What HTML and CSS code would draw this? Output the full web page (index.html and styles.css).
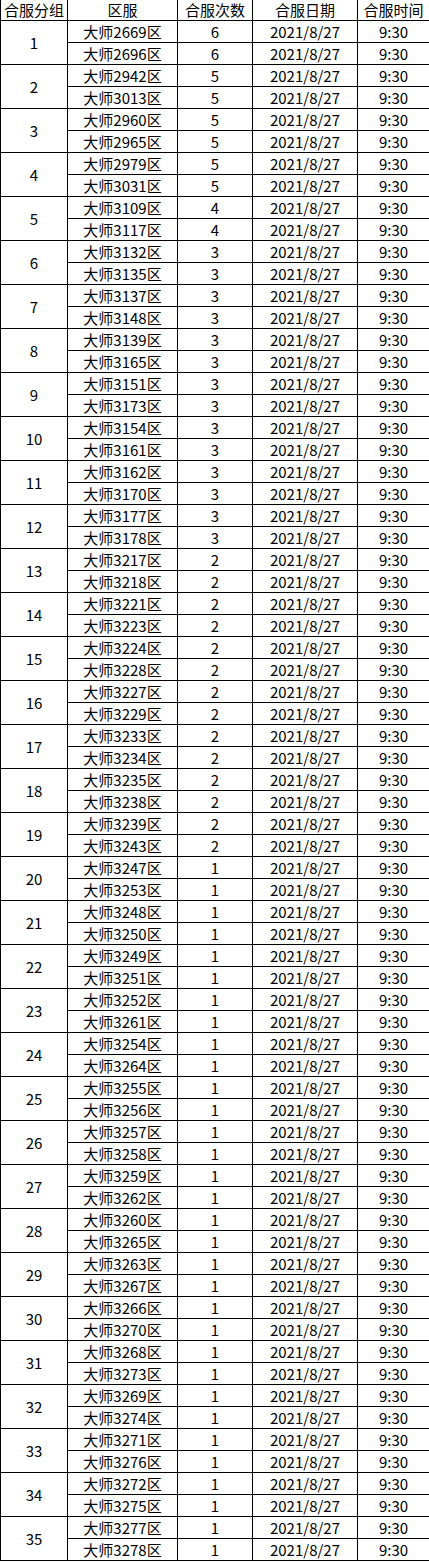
FILE: index.html
```html
<!DOCTYPE html>
<html lang="zh-CN">
<head>
<meta charset="utf-8">
<title>合服表</title>
<link rel="stylesheet" href="styles.css">
</head>
<body>
<table class="merge-table">
<colgroup>
<col class="c-group"><col class="c-zone"><col class="c-count"><col class="c-date"><col class="c-time">
</colgroup>
<thead>
<tr><th>合服分组</th><th>区服</th><th>合服次数</th><th>合服日期</th><th>合服时间</th></tr>
</thead>
<tbody>
<tr><td rowspan="2">1</td><td>大师2669区</td><td>6</td><td>2021/8/27</td><td>9:30</td></tr>
<tr><td>大师2696区</td><td>6</td><td>2021/8/27</td><td>9:30</td></tr>
<tr><td rowspan="2">2</td><td>大师2942区</td><td>5</td><td>2021/8/27</td><td>9:30</td></tr>
<tr><td>大师3013区</td><td>5</td><td>2021/8/27</td><td>9:30</td></tr>
<tr><td rowspan="2">3</td><td>大师2960区</td><td>5</td><td>2021/8/27</td><td>9:30</td></tr>
<tr><td>大师2965区</td><td>5</td><td>2021/8/27</td><td>9:30</td></tr>
<tr><td rowspan="2">4</td><td>大师2979区</td><td>5</td><td>2021/8/27</td><td>9:30</td></tr>
<tr><td>大师3031区</td><td>5</td><td>2021/8/27</td><td>9:30</td></tr>
<tr><td rowspan="2">5</td><td>大师3109区</td><td>4</td><td>2021/8/27</td><td>9:30</td></tr>
<tr><td>大师3117区</td><td>4</td><td>2021/8/27</td><td>9:30</td></tr>
<tr><td rowspan="2">6</td><td>大师3132区</td><td>3</td><td>2021/8/27</td><td>9:30</td></tr>
<tr><td>大师3135区</td><td>3</td><td>2021/8/27</td><td>9:30</td></tr>
<tr><td rowspan="2">7</td><td>大师3137区</td><td>3</td><td>2021/8/27</td><td>9:30</td></tr>
<tr><td>大师3148区</td><td>3</td><td>2021/8/27</td><td>9:30</td></tr>
<tr><td rowspan="2">8</td><td>大师3139区</td><td>3</td><td>2021/8/27</td><td>9:30</td></tr>
<tr><td>大师3165区</td><td>3</td><td>2021/8/27</td><td>9:30</td></tr>
<tr><td rowspan="2">9</td><td>大师3151区</td><td>3</td><td>2021/8/27</td><td>9:30</td></tr>
<tr><td>大师3173区</td><td>3</td><td>2021/8/27</td><td>9:30</td></tr>
<tr><td rowspan="2">10</td><td>大师3154区</td><td>3</td><td>2021/8/27</td><td>9:30</td></tr>
<tr><td>大师3161区</td><td>3</td><td>2021/8/27</td><td>9:30</td></tr>
<tr><td rowspan="2">11</td><td>大师3162区</td><td>3</td><td>2021/8/27</td><td>9:30</td></tr>
<tr><td>大师3170区</td><td>3</td><td>2021/8/27</td><td>9:30</td></tr>
<tr><td rowspan="2">12</td><td>大师3177区</td><td>3</td><td>2021/8/27</td><td>9:30</td></tr>
<tr><td>大师3178区</td><td>3</td><td>2021/8/27</td><td>9:30</td></tr>
<tr><td rowspan="2">13</td><td>大师3217区</td><td>2</td><td>2021/8/27</td><td>9:30</td></tr>
<tr><td>大师3218区</td><td>2</td><td>2021/8/27</td><td>9:30</td></tr>
<tr><td rowspan="2">14</td><td>大师3221区</td><td>2</td><td>2021/8/27</td><td>9:30</td></tr>
<tr><td>大师3223区</td><td>2</td><td>2021/8/27</td><td>9:30</td></tr>
<tr><td rowspan="2">15</td><td>大师3224区</td><td>2</td><td>2021/8/27</td><td>9:30</td></tr>
<tr><td>大师3228区</td><td>2</td><td>2021/8/27</td><td>9:30</td></tr>
<tr><td rowspan="2">16</td><td>大师3227区</td><td>2</td><td>2021/8/27</td><td>9:30</td></tr>
<tr><td>大师3229区</td><td>2</td><td>2021/8/27</td><td>9:30</td></tr>
<tr><td rowspan="2">17</td><td>大师3233区</td><td>2</td><td>2021/8/27</td><td>9:30</td></tr>
<tr><td>大师3234区</td><td>2</td><td>2021/8/27</td><td>9:30</td></tr>
<tr><td rowspan="2">18</td><td>大师3235区</td><td>2</td><td>2021/8/27</td><td>9:30</td></tr>
<tr><td>大师3238区</td><td>2</td><td>2021/8/27</td><td>9:30</td></tr>
<tr><td rowspan="2">19</td><td>大师3239区</td><td>2</td><td>2021/8/27</td><td>9:30</td></tr>
<tr><td>大师3243区</td><td>2</td><td>2021/8/27</td><td>9:30</td></tr>
<tr><td rowspan="2">20</td><td>大师3247区</td><td>1</td><td>2021/8/27</td><td>9:30</td></tr>
<tr><td>大师3253区</td><td>1</td><td>2021/8/27</td><td>9:30</td></tr>
<tr><td rowspan="2">21</td><td>大师3248区</td><td>1</td><td>2021/8/27</td><td>9:30</td></tr>
<tr><td>大师3250区</td><td>1</td><td>2021/8/27</td><td>9:30</td></tr>
<tr><td rowspan="2">22</td><td>大师3249区</td><td>1</td><td>2021/8/27</td><td>9:30</td></tr>
<tr><td>大师3251区</td><td>1</td><td>2021/8/27</td><td>9:30</td></tr>
<tr><td rowspan="2">23</td><td>大师3252区</td><td>1</td><td>2021/8/27</td><td>9:30</td></tr>
<tr><td>大师3261区</td><td>1</td><td>2021/8/27</td><td>9:30</td></tr>
<tr><td rowspan="2">24</td><td>大师3254区</td><td>1</td><td>2021/8/27</td><td>9:30</td></tr>
<tr><td>大师3264区</td><td>1</td><td>2021/8/27</td><td>9:30</td></tr>
<tr><td rowspan="2">25</td><td>大师3255区</td><td>1</td><td>2021/8/27</td><td>9:30</td></tr>
<tr><td>大师3256区</td><td>1</td><td>2021/8/27</td><td>9:30</td></tr>
<tr><td rowspan="2">26</td><td>大师3257区</td><td>1</td><td>2021/8/27</td><td>9:30</td></tr>
<tr><td>大师3258区</td><td>1</td><td>2021/8/27</td><td>9:30</td></tr>
<tr><td rowspan="2">27</td><td>大师3259区</td><td>1</td><td>2021/8/27</td><td>9:30</td></tr>
<tr><td>大师3262区</td><td>1</td><td>2021/8/27</td><td>9:30</td></tr>
<tr><td rowspan="2">28</td><td>大师3260区</td><td>1</td><td>2021/8/27</td><td>9:30</td></tr>
<tr><td>大师3265区</td><td>1</td><td>2021/8/27</td><td>9:30</td></tr>
<tr><td rowspan="2">29</td><td>大师3263区</td><td>1</td><td>2021/8/27</td><td>9:30</td></tr>
<tr><td>大师3267区</td><td>1</td><td>2021/8/27</td><td>9:30</td></tr>
<tr><td rowspan="2">30</td><td>大师3266区</td><td>1</td><td>2021/8/27</td><td>9:30</td></tr>
<tr><td>大师3270区</td><td>1</td><td>2021/8/27</td><td>9:30</td></tr>
<tr><td rowspan="2">31</td><td>大师3268区</td><td>1</td><td>2021/8/27</td><td>9:30</td></tr>
<tr><td>大师3273区</td><td>1</td><td>2021/8/27</td><td>9:30</td></tr>
<tr><td rowspan="2">32</td><td>大师3269区</td><td>1</td><td>2021/8/27</td><td>9:30</td></tr>
<tr><td>大师3274区</td><td>1</td><td>2021/8/27</td><td>9:30</td></tr>
<tr><td rowspan="2">33</td><td>大师3271区</td><td>1</td><td>2021/8/27</td><td>9:30</td></tr>
<tr><td>大师3276区</td><td>1</td><td>2021/8/27</td><td>9:30</td></tr>
<tr><td rowspan="2">34</td><td>大师3272区</td><td>1</td><td>2021/8/27</td><td>9:30</td></tr>
<tr><td>大师3275区</td><td>1</td><td>2021/8/27</td><td>9:30</td></tr>
<tr><td rowspan="2">35</td><td>大师3277区</td><td>1</td><td>2021/8/27</td><td>9:30</td></tr>
<tr><td>大师3278区</td><td>1</td><td>2021/8/27</td><td>9:30</td></tr>
</tbody>
</table>
</body>
</html>
```

FILE: styles.css
```css
html, body {
  margin: 0;
  padding: 0;
  background: #ffffff;
}

.merge-table {
  border-collapse: collapse;
  table-layout: fixed;
  width: 429px;
  margin-top: -1px;
  font-family: "Noto Sans CJK SC", "Microsoft YaHei", sans-serif;
  font-size: 15px;
  color: #000000;
}

.c-group { width: 67px; }
.c-zone { width: 110px; }
.c-count { width: 75px; }
.c-date { width: 105px; }
.c-time { width: 72px; }

.merge-table th,
.merge-table td {
  border: 1px solid #000000;
  padding: 0;
  height: 21px;
  line-height: 20px;
  text-align: center;
  vertical-align: middle;
  font-weight: normal;
  white-space: nowrap;
  overflow: hidden;
}

.merge-table thead th {
  border-top: none;
}
```
